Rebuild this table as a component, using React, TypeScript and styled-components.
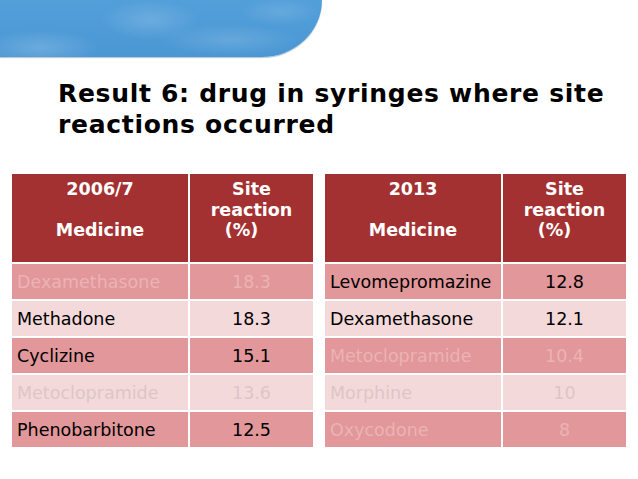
import React from 'react';
import styled, {createGlobalStyle} from "styled-components";

const GlobalStyle = createGlobalStyle`
    html, body {
        margin: 0;
        padding: 0;
        background: #ffffff;
    }
    body {
        width: 638px;
        height: 479px;
        overflow: hidden;
        font-family: "DejaVu Sans", Verdana, sans-serif;
    }
`

type Row = { name: string, value: string, faded?: boolean }

const left: Row[] = [
    {name: "Dexamethasone", value: "18.3", faded: true},
    {name: "Methadone", value: "18.3"},
    {name: "Cyclizine", value: "15.1"},
    {name: "Metoclopramide", value: "13.6", faded: true},
    {name: "Phenobarbitone", value: "12.5"},
]

const right: Row[] = [
    {name: "Levomepromazine", value: "12.8"},
    {name: "Dexamethasone", value: "12.1"},
    {name: "Metoclopramide", value: "10.4", faded: true},
    {name: "Morphine", value: "10", faded: true},
    {name: "Oxycodone", value: "8", faded: true},
]

const ResultTable = ({year, rows}: { year: string, rows: Row[] }) => {
    return (
        <Table>
            <HeadCell>
                <span>{year}</span>
                <span>&nbsp;</span>
                <span>Medicine</span>
            </HeadCell>
            <HeadCell>
                <span>Site</span>
                <span>reaction</span>
                <Percent>(%)</Percent>
            </HeadCell>
            {rows.map((r, i) => (
                <React.Fragment key={r.name + i}>
                    <NameCell $odd={i % 2 === 0} $faded={r.faded}>{r.name}</NameCell>
                    <ValueCell $odd={i % 2 === 0} $faded={r.faded}>{r.value}</ValueCell>
                </React.Fragment>
            ))}
        </Table>
    )
}

export default function App() {
    return (
        <Slide>
            <GlobalStyle/>
            <Banner/>
            <Title>Result 6: drug in syringes where site reactions occurred</Title>
            <Tables>
                <ResultTable year="2006/7" rows={left}/>
                <ResultTable year="2013" rows={right}/>
            </Tables>
        </Slide>
    )
}

const Slide = styled.div`
    width: 638px;
    height: 479px;
    display: flex;
    flex-direction: column;
`

const Banner = styled.div`
    width: 322px;
    height: 57px;
    border-bottom-right-radius: 60px 57px;
    background:
        radial-gradient(ellipse 60px 18px at 40px 48px, rgba(255, 255, 255, 0.18), transparent),
        radial-gradient(ellipse 50px 20px at 150px 20px, rgba(255, 255, 255, 0.16), transparent),
        radial-gradient(ellipse 70px 16px at 230px 40px, rgba(255, 255, 255, 0.14), transparent),
        radial-gradient(ellipse 40px 14px at 280px 12px, rgba(255, 255, 255, 0.12), transparent),
        linear-gradient(180deg, #539fda 0%, #4a97d4 100%);
    box-shadow: 0 1px 1px rgba(40, 80, 120, 0.35);
`

const Title = styled.h1`
    margin: 21px 0 0 58px;
    width: 570px;
    font-size: 25px;
    line-height: 31px;
    font-weight: 700;
    color: #000000;
    letter-spacing: 0.7px;
`

const Tables = styled.div`
    display: flex;
    gap: 12px;
    margin: 34px 0 0 12px;
`

const Table = styled.div`
    display: grid;
    grid-template-columns: 176px 123px;
    grid-template-rows: 88px repeat(5, 35px);
    gap: 2px;
    font-size: 17.5px;
`

const HeadCell = styled.div`
    background: #a33132;
    color: #ffffff;
    font-weight: 700;
    display: flex;
    flex-direction: column;
    align-items: center;
    padding-top: 5px;
    line-height: 20.5px;
`

const Percent = styled.span`
    margin-right: 20px;
`

const NameCell = styled.div<{ $odd: boolean, $faded?: boolean }>`
    background: ${p => p.$odd ? '#e2979a' : '#f4d9da'};
    color: ${p => p.$faded ? (p.$odd ? '#ebb3b5' : '#ddc6c7') : '#000000'};
    display: flex;
    align-items: center;
    padding-left: 5px;
    white-space: nowrap;
`

const ValueCell = styled(NameCell)`
    justify-content: center;
    padding-left: 0;
`
